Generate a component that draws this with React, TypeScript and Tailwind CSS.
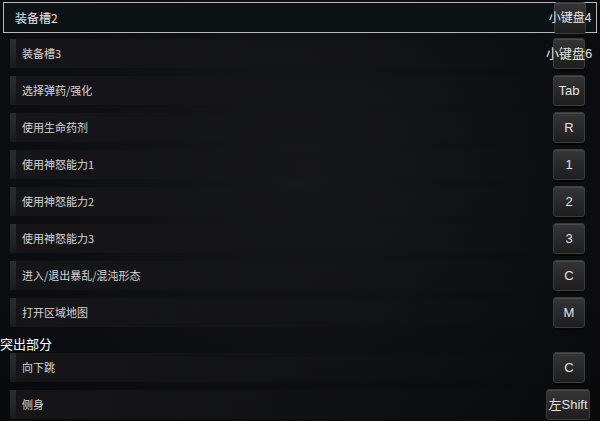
import React from 'react'

type Binding = { label: string; key: string; wide?: boolean }

const topRows: Binding[] = [
  { label: '装备槽3', key: '小键盘6' },
  { label: '选择弹药/强化', key: 'Tab' },
  { label: '使用生命药剂', key: 'R' },
  { label: '使用神怒能力1', key: '1' },
  { label: '使用神怒能力2', key: '2' },
  { label: '使用神怒能力3', key: '3' },
  { label: '进入/退出暴乱/混沌形态', key: 'C' },
  { label: '打开区域地图', key: 'M' },
]

const bottomRows: Binding[] = [
  { label: '向下跳', key: 'C' },
  { label: '侧身', key: '左Shift', wide: true },
]

const capFont = { fontFamily: '"Liberation Sans", "Noto Sans CJK SC", sans-serif' }

function KeyCap({ text, wide }: { text: string; wide?: boolean }) {
  return (
    <div
      className={`flex h-[31px] items-center justify-center whitespace-nowrap rounded-[3px] border border-[#3c3c3c] bg-gradient-to-b from-[#353535] to-[#1e1e1e] text-[13px] text-[#e2e2e2] shadow-[inset_0_1px_0_#4a4a4a,0_2px_0_#050505] ${
        wide ? 'w-[44px]' : 'w-[32px]'
      }`}
      style={capFont}
    >
      {text}
    </div>
  )
}

function Row({ label, keyText, wide }: { label: string; keyText: string; wide?: boolean }) {
  return (
    <div className="flex h-[37px] items-center">
      <div className="flex h-[29px] flex-1 items-center">
        <div className="ml-[10px] h-full w-[6px] bg-gradient-to-b from-[#2c2c2c] via-[#262626] to-[#1a1a1a]" />
        <div className="flex h-full flex-1 items-center bg-gradient-to-r from-[#161618] to-transparent pl-[6px] text-[11px] text-[#d6d6d6]">
          {label}
        </div>
      </div>
      <div className={`flex justify-center ${wide ? 'mr-[10px]' : 'mr-[15px]'}`}>
        <KeyCap text={keyText} wide={wide} />
      </div>
    </div>
  )
}

export default function App() {
  return (
    <div
      className="relative h-[421px] w-[600px] overflow-hidden bg-[radial-gradient(ellipse_at_50%_40%,#17181c_0%,#0d0e11_60%,#08090b_100%)] pt-[2px]"
      style={{ fontFamily: '"Noto Sans CJK SC", "Noto Sans", sans-serif' }}
    >
      {/* selected row */}
      <div className="mx-[3px] flex h-[31px] items-center justify-between border border-[#b8b8b8] bg-[#0d1215]">
        <span className="pl-[11px] text-[12px] text-[#e4e4e4]">装备槽2</span>
        <div className="mr-[10px] flex w-[32px] justify-center">
          <div
            className="flex h-[32px] w-[32px] items-center justify-center whitespace-nowrap rounded-[3px] border border-[#3c3c3c] bg-gradient-to-b from-[#353535] to-[#1e1e1e] text-[12px] text-[#e8e8e8] shadow-[inset_0_1px_0_#4a4a4a]"
            style={capFont}
          >
            <span>小键盘4</span>
          </div>
        </div>
      </div>

      <div className="mt-[2px]">
        {topRows.map((r) => (
          <Row key={r.label} label={r.label} keyText={r.key} wide={r.wide} />
        ))}
      </div>

      <div className="h-[18px] pt-[6px] text-[13px] leading-none text-white">突出部分</div>

      <div>
        {bottomRows.map((r) => (
          <Row key={r.label} label={r.label} keyText={r.key} wide={r.wide} />
        ))}
      </div>
    </div>
  )
}
